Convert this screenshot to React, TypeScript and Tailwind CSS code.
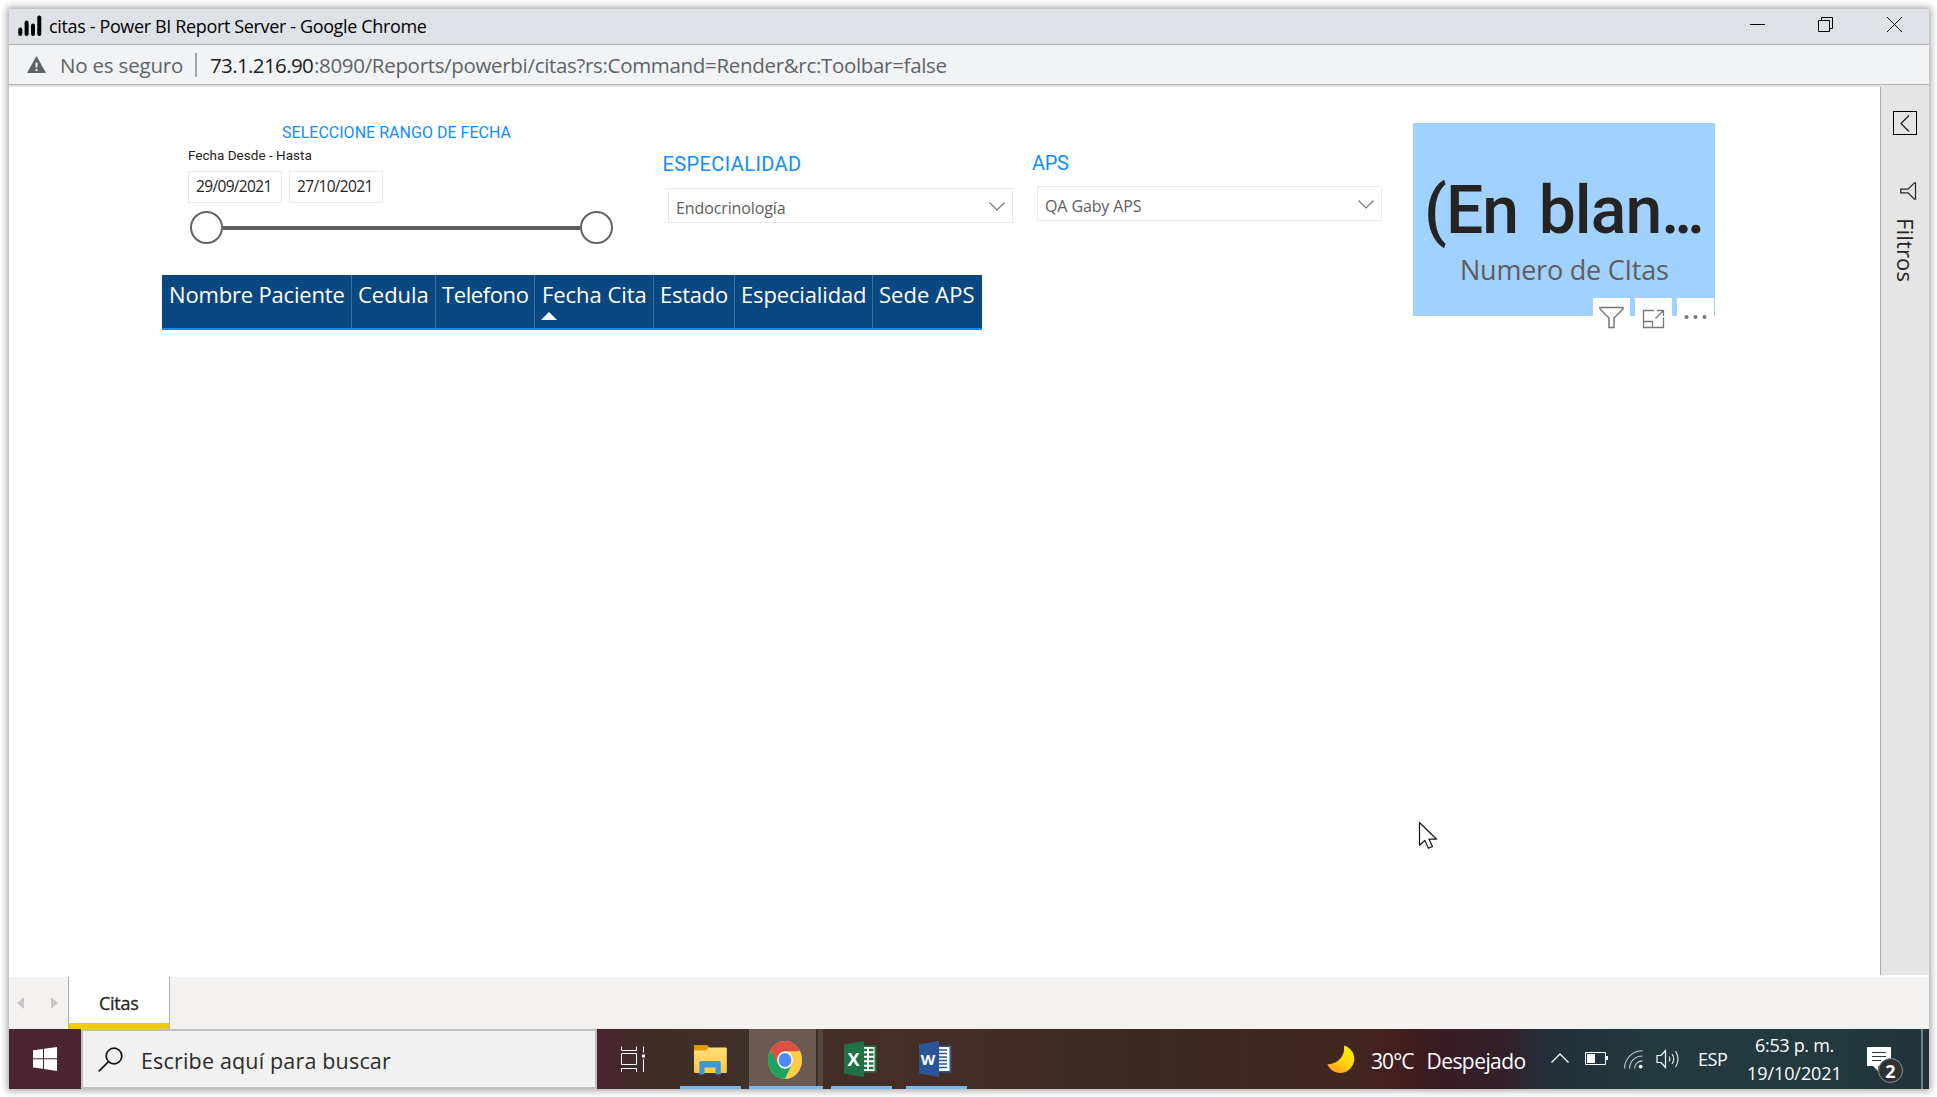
import type { ReactNode } from "react";

function Select({ value, className }: { value: string; className: string }) {
  return (
    <div className={`flex justify-between border border-[#eaeaea] bg-white text-[16px] text-[#605e5c] ${className}`}>
      <span className="whitespace-nowrap leading-[39px] tracking-[-0.11px]">{value}</span>
      <svg width="16" height="9" viewBox="0 0 16 9" className="mr-[7px] mt-[13px]" fill="none" stroke="#777573" strokeWidth="1.2">
        <path d="M.5.5 8 8 15.500.5" />
      </svg>
    </div>
  );
}

const columns = [
  { name: "Nombre Paciente", cls: "w-[190px] pl-[7px] tracking-[-0.17px]" },
  { name: "Cedula", cls: "w-[84px] pl-[6px] tracking-[-0.04px]" },
  { name: "Telefono", cls: "w-[99px] pl-[6px] tracking-[-0.4px]" },
  { name: "Fecha Cita", cls: "w-[119px] pl-[7px] tracking-[-0.05px]", sorted: true },
  { name: "Estado", cls: "w-[81px] pl-[6px] tracking-[-0.25px]" },
  { name: "Especialidad", cls: "w-[138px] pl-[6px] tracking-[-0.14px]" },
  { name: "Sede APS", cls: "w-[109px] pl-[6px] tracking-[0.06px]" },
];

function TitleBar() {
  return (
    <header className="flex h-[36px] shrink-0 items-center border-b border-[#adafb2] bg-[#dee1e6]">
      <svg width="24" height="22" viewBox="0 0 24 22" className="ml-[9px] -mt-px" stroke="#000" strokeWidth="4" strokeLinecap="round">
        <path d="M2.300 14.500v4.500M8.600 7.500V19M15 10.500V19M21.300 2.500V19" />
      </svg>
      <span className="ml-[7px] whitespace-nowrap text-[18px] tracking-[-0.36px] text-black">
        citas - Power BI Report Server - Google Chrome
      </span>
      <svg width="153" height="17" viewBox="0 0 153 17" className="ml-auto mr-[27px] -mt-[5px]" fill="none" stroke="#000" strokeWidth="1">
        <path d="M1 8.500h15" />
        <path d="M69.500 4.500h11v11h-11zM72.500 4.500v-3h11v11h-3" />
        <path d="m138 1 15 15M153 1l-15 15" />
      </svg>
    </header>
  );
}

function AddressBar() {
  return (
    <div className="flex h-[40px] shrink-0 items-center border-b border-[#b1b3b5] bg-[#f1f3f4] text-[20.5px] text-[#5f6368]">
      <svg width="19" height="17" viewBox="0 0 19 17" className="ml-[18px]">
        <path d="M9.500 0 19 17H0z" fill="#5f6368" />
        <path d="M8.500 6.500h2v5h-2zM8.500 13h2v2h-2z" fill="#f1f3f4" />
      </svg>
      <span className="ml-[14px] w-[135px] whitespace-nowrap pt-[2px] tracking-[-0.19px]">No es seguro</span>
      <span className="mr-[13px] h-[24px] w-[2px] bg-[#a3a5a8]" />
      <span className="w-[104px] whitespace-nowrap pt-[2px] tracking-[-0.62px] text-[#202124]">73.1.216.90</span>
      <span className="whitespace-nowrap pt-[2px] tracking-[-0.32px]">:8090/Reports/powerbi/citas?rs:Command=Render&amp;rc:Toolbar=false</span>
    </div>
  );
}

function DateBox({ children }: { children: ReactNode }) {
  return (
    <div className="h-[32px] w-[94px] whitespace-nowrap border border-[#eaeaea] pl-[7px] text-[15.5px] leading-[29px] tracking-[-0.66px] text-[#252423]">
      {children}
    </div>
  );
}

function DateSlicer() {
  return (
    <section className="ml-[179px] w-[425px] pt-[36px]">
      <h2 className="whitespace-nowrap pl-[94px] font-['Roboto'] text-[16px] leading-[20px] tracking-[0.02px] text-[#118dff]">
        SELECCIONE RANGO DE FECHA
      </h2>
      <div className="whitespace-nowrap pb-[2px] font-['Roboto'] text-[13.500px] leading-[24px] tracking-[0.01px] text-[#252423]">
        Fecha Desde - Hasta
      </div>
      <div className="mt-[2px] flex gap-[7px]">
        <DateBox>29/09/2021</DateBox>
        <DateBox>27/10/2021</DateBox>
      </div>
      <div className="ml-[2px] mt-[8px] flex w-[423px] items-center">
        <span className="size-[33px] rounded-full border-[2.500px] border-[#666462]" />
        <span className="h-[4px] grow bg-[#605e5c]" />
        <span className="size-[33px] rounded-full border-[2.500px] border-[#666462]" />
      </div>
    </section>
  );
}

function CountCard() {
  return (
    <section className="relative ml-[31px] mt-[36px] flex h-[193px] w-[302px] shrink-0 flex-col bg-[#a0d1ff]">
      <div className="mt-[54px] whitespace-nowrap pl-[11px] font-['Roboto'] text-[66px] font-medium leading-[68px] tracking-[-0.9px] text-[#252423] [word-spacing:5px]">
        (En blan<span className="tracking-[-5.500px]">...</span>
      </div>
      <div className="mt-[5px] whitespace-nowrap pl-[47px] text-[27px] leading-[40px] tracking-[-0.23px] text-[#605e5c]">
        Numero de CItas
      </div>
      <div className="absolute left-[180px] top-[175px] flex gap-[5px]">
        <span className="h-[36px] w-[37px] bg-white">
          <svg width="37" height="36" viewBox="0 0 37 36" fill="none" stroke="#7a7876" strokeWidth="1.500">
            <path d="M7.500 9.500h22.500v1.500l-9 9v9.500h-5V20l-9-9V9.500z" />
          </svg>
        </span>
        <span className="h-[36px] w-[37px] bg-white">
          <svg width="37" height="36" viewBox="0 0 37 36" fill="none" stroke="#7a7876" strokeWidth="1.300">
            <path d="M19 12.500H8.500V29.500h20V19.500M8.500 23.500h9v6M20.500 20.500l8-8M22 12.500h6.500V18" />
          </svg>
        </span>
        <span className="h-[36px] w-[37px] bg-white">
          <svg width="37" height="36" viewBox="0 0 37 36" fill="#7a7876">
            <circle cx="9.500" cy="19" r="2" />
            <circle cx="18.500" cy="19" r="2" />
            <circle cx="27.500" cy="19" r="2" />
          </svg>
        </span>
      </div>
    </section>
  );
}

function Report() {
  return (
    <div className="flex min-h-0 grow border-t-2 border-[#e3e4e5] bg-white">
      <main className="w-[1871px] shrink-0">
        <div className="flex h-[188px] items-start">
          <DateSlicer />
          <section className="ml-[49px] w-[351px] pt-[62px]">
            <h2 className="pl-[0.5px] font-['Roboto'] text-[20px] leading-[30px] tracking-[0.4px] text-[#118dff]">ESPECIALIDAD</h2>
            <Select value="Endocrinología" className="ml-[6px] mt-[9px] h-[35px] pl-[7px]" />
          </section>
          <section className="ml-[19px] w-[350px] pt-[61px]">
            <h2 className="font-['Roboto'] text-[20px] leading-[30px] tracking-[-0.33px] text-[#118dff]">APS</h2>
            <Select value="QA Gaby APS" className="ml-[5px] mt-[8px] h-[35px] pl-[7px]" />
          </section>
          <CountCard />
        </div>
        <div className="ml-[153px] flex h-[55px] w-[820px] border-b-2 border-[#118dff] bg-[#094780] text-[22px] text-white">
          {columns.map((c, i) => (
            <div key={c.name} className={`${c.cls} shrink-0 whitespace-nowrap pt-[2px] leading-[35px] ${i < columns.length - 1 ? "border-r border-[#3a6d9c]" : ""}`}>
              {c.name}
              {c.sorted && (
                <svg width="16" height="8" viewBox="0 0 16 8" className="-ml-px block" fill="#fff">
                  <path d="M8 0 16 8H0z" />
                </svg>
              )}
            </div>
          ))}
        </div>
      </main>
      <aside className="mb-[2px] flex grow flex-col border-l border-[#aeacaa] bg-[#e5e5e5]">
        <span className="ml-[12px] mt-[24px] flex size-[24px] items-center justify-center border border-black">
          <svg width="10" height="17" viewBox="0 0 10 17" fill="none" stroke="#252423" strokeWidth="1.300">
            <path d="M9 .5 1 8.500l8 8" />
          </svg>
        </span>
        <svg width="17" height="18" viewBox="0 0 17 18" className="ml-[19px] mt-[47px]" fill="none" stroke="#252423" strokeWidth="1.200">
          <path d="M15.500.8v16.400h-1L8 10.800H.8V7.200H8L14.500.8z" />
        </svg>
        <span className="ml-[11px] mt-[18px] w-[27px] text-[22px] leading-[27px] tracking-[0.150px] text-[#252423] [writing-mode:vertical-rl]">Filtros</span>
      </aside>
    </div>
  );
}

function PageTabs() {
  return (
    <nav className="flex h-[52px] shrink-0 bg-[#f3f2f1]">
      <div className="flex w-[59px] items-center gap-[27px] pl-[8px]">
        <svg width="7" height="12" viewBox="0 0 7 12" fill="#c8c6c4"><path d="M7 0v12L0 6z" /></svg>
        <svg width="7" height="12" viewBox="0 0 7 12" fill="#c8c6c4"><path d="M0 0v12l7-6z" /></svg>
      </div>
      <div className="flex w-[102px] justify-center border-x border-[#b3b1af] bg-white">
        <span className="w-full whitespace-nowrap border-b-[6px] border-[#f2c811] pl-[30px] text-[18px] leading-[52px] tracking-[-0.28px] text-[#252423] [-webkit-text-stroke:0.3px_#252423]">
          Citas
        </span>
      </div>
    </nav>
  );
}

function AppSlot({ className, children }: { className: string; children: ReactNode }) {
  return <div className={`flex h-full flex-col items-center border-b-[3px] border-[#76b9ed] ${className}`}>{children}</div>;
}

function OfficeIcon({ letter, cls, color }: { letter: string; cls: string; color: string }) {
  return (
    <span className="relative block h-[36px] w-[33px]">
      <svg width="33" height="36" viewBox="0 0 33 36">
        <path d="M17 4.500h14.500q1 0 1 1v25q0 1-1 1H17z" fill={color} />
        <path d="M17 6h13.500v24H17z" fill="#fff" />
        {letter === "X" ? (
          <path d="M19 9h4M19 13.500h4M19 18h4M19 22.500h4M19 27h4M25 9h4.500M25 13.500h4.500M25 18h4.500M25 22.500h4.500M25 27h4.500" stroke={color} strokeWidth="2.600" />
        ) : (
          <path d="M19 9h9M19 12.500h9M19 16h9M19 19.500h9M19 23h9M19 26.500h9" stroke={color} strokeWidth="1.700" />
        )}
        <path d="M0 3.500 20 0v36L0 32.500z" fill={color} />
      </svg>
      <span className={`absolute inset-y-0 left-0 w-[19px] text-center font-bold leading-[36px] text-white ${cls}`}>{letter}</span>
    </span>
  );
}

function Taskbar() {
  return (
    <footer className="flex h-[60px] shrink-0 bg-[linear-gradient(90deg,#4a2430_0px,#4a2430_588px,#3f2d23_645px,#40302a_740px,#452e25_900px,#3c2a22_1130px,#41271f_1340px,#431f1f_1385px,#381b24_1430px,#33202a_1500px,#213039_1540px,#22393e_1640px,#22393e_1830px,#213338_1920px)] text-white">
      <div className="flex w-[72px] items-center justify-center">
        <svg width="24" height="24" viewBox="0 0 24 24" fill="#fff">
          <path d="M0 3.300 10 1.900v9.300H0zM11 1.700 24 0v11.200H11zM0 12.200h10v9.500L0 20.400zM11 12.200h13V24l-13-1.900z" />
        </svg>
      </div>
      <div className="flex w-[516px] items-center border-2 border-[#c0c0be] bg-[#f1f1f1] text-[#2b2b2b]">
        <svg width="25" height="25" viewBox="0 0 25 25" className="ml-[15px]" fill="none" stroke="#111" strokeWidth="1.700">
          <circle cx="16" cy="9" r="7.800" />
          <path d="M10.300 14.800.8 24.300" />
        </svg>
        <span className="ml-[18px] mt-[4px] whitespace-nowrap text-[21.500px] tracking-[0.170px]">Escribe aquí para buscar</span>
      </div>
      <svg width="25" height="27" viewBox="0 0 25 27" className="ml-[24px] mt-[17px]" fill="none" stroke="#fff" strokeWidth="1">
        <path d="M.5.5v4h15v-4M.5 7.500h15v11H.5zM.5 26v-3.500h15V26M22.500.5v6M22.500 13v13" />
        <path d="M21 8.500h3v3h-3z" fill="#fff" stroke="none" />
      </svg>
      <AppSlot className="ml-[34px] w-[61px] pt-[16px]">
        <svg width="33" height="31" viewBox="0 0 33 31">
          <defs>
            <linearGradient id="folder" x1="0" y1="0" x2="0" y2="1">
              <stop offset="0" stopColor="#ffe07a" />
              <stop offset="1" stopColor="#fbc840" />
            </linearGradient>
          </defs>
          <path d="M0 1q0-1 1-1h12l2.500 2.500V7H0z" fill="#dc9d06" />
          <path d="M0 5.500h12l2.500-3H32q.8 0 .8.800V27q0 1-1 1H1q-1 0-1-1z" fill="url(#folder)" />
          <path d="M5.300 29.500V18q0-2 2-2h17.500q2 0 2 2v11.500h-5.300V22.500h-11v7z" fill="#3a96dd" />
        </svg>
      </AppSlot>
      <AppSlot className="ml-[8px] w-[67px] bg-[#6b5b53] pl-[4px] pt-[12px]">
        <svg width="34" height="38" viewBox="0 0 48 48" preserveAspectRatio="none">
          <circle cx="24" cy="24" r="24" fill="#ffcd46" />
          <path d="M24 24 44.800 12A24 24 0 0 0 3.200 12L13.600 30z" fill="#dd5144" />
          <path d="M24 13H45.300A24 24 0 0 1 24 48L33.500 29.500z" fill="#ffcd46" />
          <path d="M3.200 12A24 24 0 0 0 24 48L33.500 29.500 24 35 14.500 29.500z" fill="#1da462" />
          <circle cx="24" cy="24" r="11" fill="#fff" />
          <circle cx="24" cy="24" r="9" fill="#4c8bf5" />
        </svg>
      </AppSlot>
      <AppSlot className="w-[2px] border-[#4c7da6] bg-[#3b2d27]">{null}</AppSlot>
      <AppSlot className="w-[5px] border-[#5f95c0] bg-[#55473f]">{null}</AppSlot>
      <AppSlot className="ml-[8px] w-[61px] pr-[2px] pt-[12px]">
        <OfficeIcon letter="X" cls="text-[18px]" color="#207245" />
      </AppSlot>
      <AppSlot className="ml-[14px] w-[61px] pr-[3px] pt-[12px]">
        <OfficeIcon letter="W" cls="text-[15px]" color="#2a5699" />
      </AppSlot>

      <div className="ml-auto flex items-center">
        <svg width="28" height="28" viewBox="0 0 28 28" className="mr-[16px]">
          <defs>
            <linearGradient id="moon" x1="0.700" y1="0" x2="0.300" y2="1">
              <stop offset="0" stopColor="#ffec00" />
              <stop offset="0.550" stopColor="#ffd60a" />
              <stop offset="1" stopColor="#ff9d1c" />
            </linearGradient>
          </defs>
          <path d="M17 .5A14 14 0 1 1 .3 19.300C10 19.500 18.500 12 17 .5z" fill="url(#moon)" />
        </svg>
        <span className="w-[55.500px] whitespace-nowrap pt-[5px] text-[21px] tracking-[-0.9px]">30°C</span>
        <span className="w-[124.500px] whitespace-nowrap pt-[5px] text-[21px] tracking-[-0.560px]">Despejado</span>
        <svg width="18" height="10" viewBox="0 0 18 10" className="mb-[3px]" fill="none" stroke="#fff" strokeWidth="1.300">
          <path d="M.5 9.500 9 1l8.500 8.500" />
        </svg>
        <svg width="23" height="13" viewBox="0 0 23 13" className="mb-[1px] ml-[16px]" fill="none" stroke="#fff" strokeWidth="1">
          <path d="M.5.5h20v12H.5z" />
          <path d="M2 2h8v9H2zM21 4h2v4h-2z" fill="#fff" stroke="none" />
        </svg>
        <svg width="19" height="19" viewBox="0 0 19 19" className="ml-[16px]" fill="none" stroke="#fff" strokeWidth="1.100">
          <path d="M.6 18.500C.6 8.500 8.500.8 18.500.8M5.600 18.500C5.600 11.500 11 6 18.500 6M10.600 18.500c0-4.200 3.400-7.600 7.900-7.600" opacity=".75" />
          <circle cx="16.600" cy="16.600" r="1.900" fill="#fff" stroke="none" />
        </svg>
        <svg width="24" height="20" viewBox="0 0 24 20" className="ml-[13px]" fill="none" stroke="#fff" strokeWidth="1.200">
          <path d="M1 6.500h4l4.500-5v17l-4.500-5H1z" />
          <path d="M13 7.500q1.700 2.500 0 5M16 5q3.500 5 0 10M19.500 2q5 8 0 16" opacity=".85" />
        </svg>
        <span className="ml-[18px] w-[49px] whitespace-nowrap pt-px text-[18px] tracking-[-0.440px]">ESP</span>
        <div className="flex w-[120px] flex-col text-[18px] leading-[28px]">
          <span className="whitespace-nowrap pl-[8px] tracking-[-0.320px]">6:53 p. m.</span>
          <span className="whitespace-nowrap tracking-[-0.080px]">19/10/2021</span>
        </div>
        <span className="relative block h-[24px] w-[24px]">
          <svg width="24" height="24" viewBox="0 0 24 24">
            <path d="M0 0h24v19H11v5l-5-5H0z" fill="#fff" />
            <path d="M5 5.500h14M5 9.500h14M5 13.500h9" stroke="#22393e" strokeWidth="1.200" />
          </svg>
          <span className="absolute left-[11px] top-[11px] flex size-[25px] items-center justify-center rounded-full border border-[#8d9496] bg-[#2f3132] text-[18px] font-bold leading-none">
            2
          </span>
        </span>
        <span className="ml-[30px] mr-[6px] h-[60px] w-[2px] bg-[#748486]" />
      </div>
    </footer>
  );
}

export default function App() {
  return (
    <div className="h-[1097px] w-[1937px] overflow-hidden bg-white p-[9px] pb-[8px] font-['Open_Sans',sans-serif]">
      <div className="flex h-[1080px] w-[1920px] flex-col shadow-[0_0_7px_2px_rgba(0,0,0,0.35)]">
        <TitleBar />
        <AddressBar />
        <Report />
        <PageTabs />
        <Taskbar />
      </div>
      <svg width="20" height="30" viewBox="0 0 20 30" className="absolute left-[1418px] top-[821px]" fill="#fff" stroke="#14141e" strokeWidth="1.200" strokeLinejoin="round">
        <path d="M1.500 1.500v22.700l5.300-4.700 3.700 7.800 4-1.800-3.500-7.300h7.500z" />
      </svg>
    </div>
  );
}
